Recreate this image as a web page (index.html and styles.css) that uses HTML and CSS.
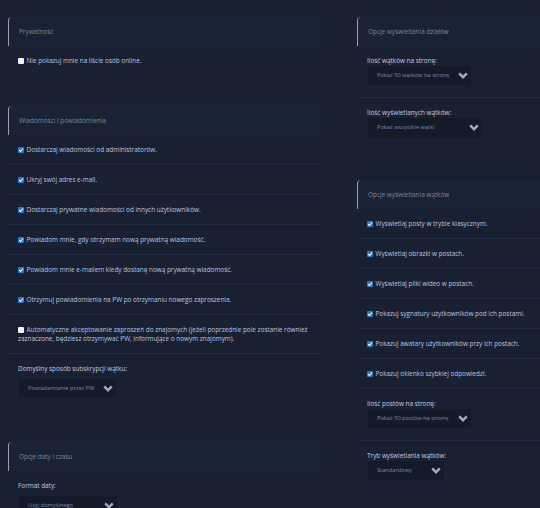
FILE: index.html
```html
<!DOCTYPE html>
<html lang="pl">
<head>
    <meta charset="UTF-8">
    <title>Opcje</title>
    <link rel="stylesheet" href="styles.css">
</head>
<body>
    <svg class="sprites" width="0" height="0">
        <symbol id="tick" viewBox="0 0 8 8"><path d="M1.5 4.2 3.3 6 6.7 2" fill="none" stroke="#fff" stroke-width="1.5"/></symbol>
        <symbol id="chev" viewBox="0 0 10 7"><path d="M1.2 1.4 5 5.2 8.8 1.4" fill="none" stroke="#a3abbd" stroke-width="2.4"/></symbol>
    </svg>
    <div class="page">
        <div class="col col-left">
            <div class="section">
                <h3 class="head">Prywatność</h3>
                <div class="row"><span class="box"></span>Nie pokazuj mnie na liście osób online.</div>
            </div>
            <div class="section">
                <h3 class="head">Wiadomości i powiadomienia</h3>
                <div class="row line"><span class="box on"><svg><use href="#tick"/></svg></span>Dostarczaj wiadomości od administratorów.</div>
                <div class="row line"><span class="box on"><svg><use href="#tick"/></svg></span>Ukryj swój adres e-mail.</div>
                <div class="row line"><span class="box on"><svg><use href="#tick"/></svg></span>Dostarczaj prywatne wiadomości od innych użytkowników.</div>
                <div class="row line"><span class="box on"><svg><use href="#tick"/></svg></span>Powiadom mnie, gdy otrzymam nową prywatną wiadomość.</div>
                <div class="row line"><span class="box on"><svg><use href="#tick"/></svg></span>Powiadom mnie e-mailem kiedy dostanę nową prywatną wiadomość.</div>
                <div class="row line"><span class="box on"><svg><use href="#tick"/></svg></span>Otrzymuj powiadomienia na PW po otrzymaniu nowego zaproszenia.</div>
                <div class="row line"><span class="box"></span>Automatyczne akceptowanie zaproszeń do znajomych (jeżeli poprzednie pole zostanie również zaznaczone, będziesz otrzymywać PW, informujące o nowym znajomym).</div>
                <div class="field">
                    <label>Domyślny sposób subskrypcji wątku:</label>
                    <div class="select w-99"><span>Powiadamianie przez PW</span><svg class="chev"><use href="#chev"/></svg></div>
                </div>
            </div>
            <div class="section">
                <h3 class="head">Opcje daty i czasu</h3>
                <div class="field">
                    <label>Format daty:</label>
                    <div class="select w-100"><span>Użyj domyślnego</span><svg class="chev"><use href="#chev"/></svg></div>
                </div>
            </div>
        </div>
        <div class="col col-right">
            <div class="section">
                <h3 class="head">Opcje wyświetlania działów</h3>
                <div class="field line">
                    <label>Ilość wątków na stronę:</label>
                    <div class="select w-105"><span>Pokaż 50 wątków na stronę</span><svg class="chev"><use href="#chev"/></svg></div>
                </div>
                <div class="field">
                    <label>Ilość wyświetlanych wątków:</label>
                    <div class="select w-116"><span>Pokaż wszystkie wątki</span><svg class="chev"><use href="#chev"/></svg></div>
                </div>
            </div>
            <div class="section">
                <h3 class="head">Opcje wyświetlania wątków</h3>
                <div class="row line"><span class="box on"><svg><use href="#tick"/></svg></span>Wyświetlaj posty w trybie klasycznym.</div>
                <div class="row line"><span class="box on"><svg><use href="#tick"/></svg></span>Wyświetlaj obrazki w postach.</div>
                <div class="row line"><span class="box on"><svg><use href="#tick"/></svg></span>Wyświetlaj pliki wideo w postach.</div>
                <div class="row line"><span class="box on"><svg><use href="#tick"/></svg></span>Pokazuj sygnatury użytkowników pod ich postami.</div>
                <div class="row line"><span class="box on"><svg><use href="#tick"/></svg></span>Pokazuj awatary użytkowników przy ich postach.</div>
                <div class="row line"><span class="box on"><svg><use href="#tick"/></svg></span>Pokazuj okienko szybkiej odpowiedzi.</div>
                <div class="field line">
                    <label>Ilość postów na stronę:</label>
                    <div class="select w-105"><span>Pokaż 50 postów na stronę</span><svg class="chev"><use href="#chev"/></svg></div>
                </div>
                <div class="field">
                    <label>Tryb wyświetlania wątków:</label>
                    <div class="select w-78"><span>Standardowy</span><svg class="chev"><use href="#chev"/></svg></div>
                </div>
            </div>
        </div>
    </div>
</body>
</html>
```

FILE: styles.css
```css
html, body {
    margin: 0;
    height: 508px;
    overflow: hidden;
}
body {
    font-family: "Open Sans", sans-serif;
    font-size: 6.4px;
    line-height: 9px;
    color: #bcc5e0;
    background: #182032;
}
.sprites {
    position: absolute;
}
.page {
    display: flex;
    gap: 37px;
    padding: 17px 0 0 8px;
}
.col-left {
    width: 312px;
}
.col-right {
    width: 183px;
    flex: none;
}
.section + .section {
    margin-top: 31px;
}
.col-left .section + .section .head {
    margin-top: 0;
}
.head {
    margin: 0;
    height: 29px;
    padding-left: 10px;
    display: flex;
    align-items: center;
    font-size: 6.4px;
    font-weight: 400;
    color: #7f8697;
    background: #1a2235;
    border-left: 1px solid #9aa1ae;
    border-top-left-radius: 4px;
}
.row {
    padding: 10px 10px 10px;
}
.line {
    border-bottom: 1px solid #1f2a40;
}
.box {
    display: inline-block;
    width: 6px;
    height: 6px;
    margin-right: 2.5px;
    vertical-align: -0.5px;
    background: #f2f2f2;
    border-radius: 1px;
}
.box.on {
    background: #1f7ad8;
}
.box svg {
    display: block;
    width: 6px;
    height: 6px;
}
.field {
    padding: 10px 10px 11px;
}
.col-left .field {
    padding-bottom: 12px;
}
.field label {
    display: block;
    color: #c2cbe4;
}
.col-left .field label {
    margin-bottom: 5px;
}
.select {
    height: 21px;
    box-sizing: border-box;
    display: flex;
    align-items: center;
    justify-content: space-between;
    padding: 0 3px 0 9px;
    font-size: 5.7px;
    color: #7d88a8;
    background: #141a28;
    border: 1px solid #182035;
    white-space: nowrap;
}
.chev {
    width: 10px;
    height: 7px;
    flex: none;
}
.w-78 { width: 78px; }
.w-99 { width: 99px; }
.w-100 { width: 100px; }
.w-105 { width: 105px; }
.w-116 { width: 116px; }
```
